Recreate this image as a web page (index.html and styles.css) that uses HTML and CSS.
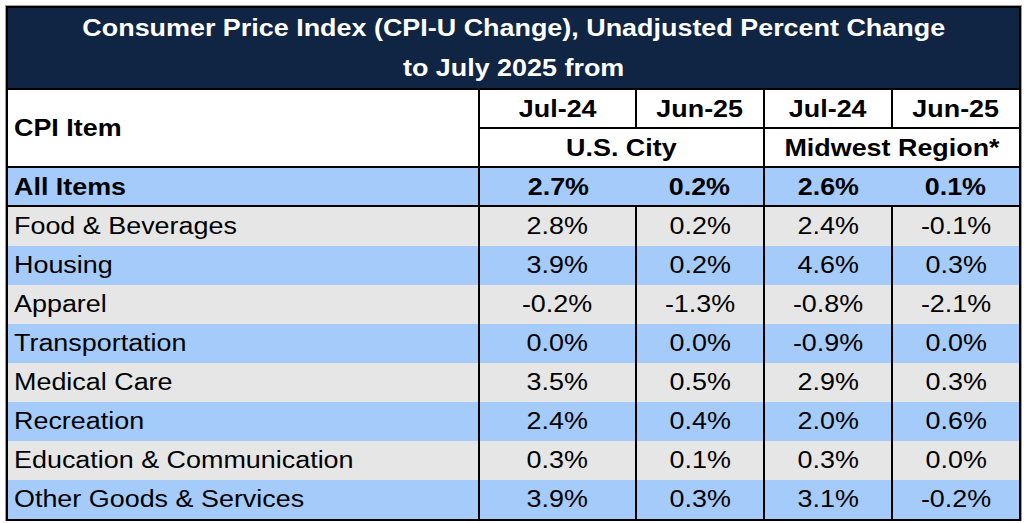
FILE: index.html
```html
<!DOCTYPE html>
<html>
<head>
<meta charset="utf-8">
<link rel="stylesheet" href="styles.css">
</head>
<body>
<div class="frame">
<table class="cpi">
  <colgroup>
    <col class="c1"><col class="c2"><col class="c3"><col class="c4"><col class="c5">
  </colgroup>
  <tr class="title">
    <td colspan="5"><span class="t">Consumer Price Index (CPI-U Change), Unadjusted Percent Change</span><br><span class="t">to July 2025 from</span></td>
  </tr>
  <tr class="hd1">
    <td rowspan="2" class="item"><span class="t">CPI Item</span></td>
    <td><span class="t">Jul-24</span></td>
    <td class="grp"><span class="t">Jun-25</span></td>
    <td><span class="t">Jul-24</span></td>
    <td><span class="t">Jun-25</span></td>
  </tr>
  <tr class="hd2">
    <td colspan="2" class="grp"><span class="t">U.S. City</span></td>
    <td colspan="2"><span class="t">Midwest Region*</span></td>
  </tr>
  <tr class="all">
    <td class="label"><span class="t">All Items</span></td>
    <td class="nb"><span class="t">2.7%</span></td>
    <td class="grp"><span class="t">0.2%</span></td>
    <td class="nb"><span class="t">2.6%</span></td>
    <td><span class="t">0.1%</span></td>
  </tr>
  <tr class="row gray first">
    <td class="label"><span class="t">Food &amp; Beverages</span></td>
    <td><span class="t">2.8%</span></td><td><span class="t">0.2%</span></td><td><span class="t">2.4%</span></td><td><span class="t">-0.1%</span></td>
  </tr>
  <tr class="row blue">
    <td class="label"><span class="t">Housing</span></td>
    <td><span class="t">3.9%</span></td><td><span class="t">0.2%</span></td><td><span class="t">4.6%</span></td><td><span class="t">0.3%</span></td>
  </tr>
  <tr class="row gray">
    <td class="label"><span class="t">Apparel</span></td>
    <td><span class="t">-0.2%</span></td><td><span class="t">-1.3%</span></td><td><span class="t">-0.8%</span></td><td><span class="t">-2.1%</span></td>
  </tr>
  <tr class="row blue">
    <td class="label"><span class="t">Transportation</span></td>
    <td><span class="t">0.0%</span></td><td><span class="t">0.0%</span></td><td><span class="t">-0.9%</span></td><td><span class="t">0.0%</span></td>
  </tr>
  <tr class="row gray">
    <td class="label"><span class="t">Medical Care</span></td>
    <td><span class="t">3.5%</span></td><td><span class="t">0.5%</span></td><td><span class="t">2.9%</span></td><td><span class="t">0.3%</span></td>
  </tr>
  <tr class="row blue">
    <td class="label"><span class="t">Recreation</span></td>
    <td><span class="t">2.4%</span></td><td><span class="t">0.4%</span></td><td><span class="t">2.0%</span></td><td><span class="t">0.6%</span></td>
  </tr>
  <tr class="row gray">
    <td class="label"><span class="t">Education &amp; Communication</span></td>
    <td><span class="t">0.3%</span></td><td><span class="t">0.1%</span></td><td><span class="t">0.3%</span></td><td><span class="t">0.0%</span></td>
  </tr>
  <tr class="row blue">
    <td class="label"><span class="t">Other Goods &amp; Services</span></td>
    <td><span class="t">3.9%</span></td><td><span class="t">0.3%</span></td><td><span class="t">3.1%</span></td><td><span class="t">-0.2%</span></td>
  </tr>
</table>
</div>
</body>
</html>
```

FILE: styles.css
```css
html, body {
  margin: 0;
  padding: 0;
  background: #ffffff;
}

.frame {
  padding: 6px 0 0 6px;
}

.cpi {
  border-collapse: collapse;
  table-layout: fixed;
  width: 1015px;
  border: 2px solid #000;
  box-shadow: 0 0 0 1px #9c9c9c;
  font-family: "Liberation Sans", Arial, sans-serif;
  color: #000;
}

.c1 { width: 472px; }
.c2 { width: 157px; }
.c3 { width: 128px; }
.c4 { width: 128px; }
.c5 { width: 128px; }

.cpi td {
  padding: 0;
  text-align: center;
  vertical-align: middle;
  white-space: nowrap;
  overflow: visible;
  border-left: 2px solid #000;
  border-right: 2px solid #000;
}

.t {
  display: inline-block;
  transform: scaleX(1.17);
  transform-origin: center;
}

.title td {
  background: #0f2543;
  color: #fff;
  font-weight: bold;
  font-size: 23px;
  line-height: 40px;
  height: 80px;
  border-bottom: 2px solid #000;
}

.hd1 td, .hd2 td {
  background: #fff;
  font-weight: bold;
  font-size: 24px;
  height: 37px;
  border-bottom: 2px solid #000;
}

.hd1 td.item {
  text-align: left;
  padding-left: 6px;
}

.hd1 .t, .hd2 .t, .all .t {
  transform: scaleX(1.12);
}

.all td {
  background: #a5cbfb;
  font-weight: bold;
  font-size: 24px;
  height: 37px;
  border-bottom: 2px solid #000;
}

.all td.nb {
  border-right: none;
}
.all td.nb + td {
  border-left: none;
}

.row td {
  font-size: 23px;
  height: 39px;
}

.row.gray td { background: #e6e6e6; }
.row.blue td { background: #a5cbfb; }

.cpi td.label {
  text-align: left;
  padding-left: 6px;
}

.cpi td.label .t,
.cpi td.item .t {
  transform-origin: left center;
}
```
